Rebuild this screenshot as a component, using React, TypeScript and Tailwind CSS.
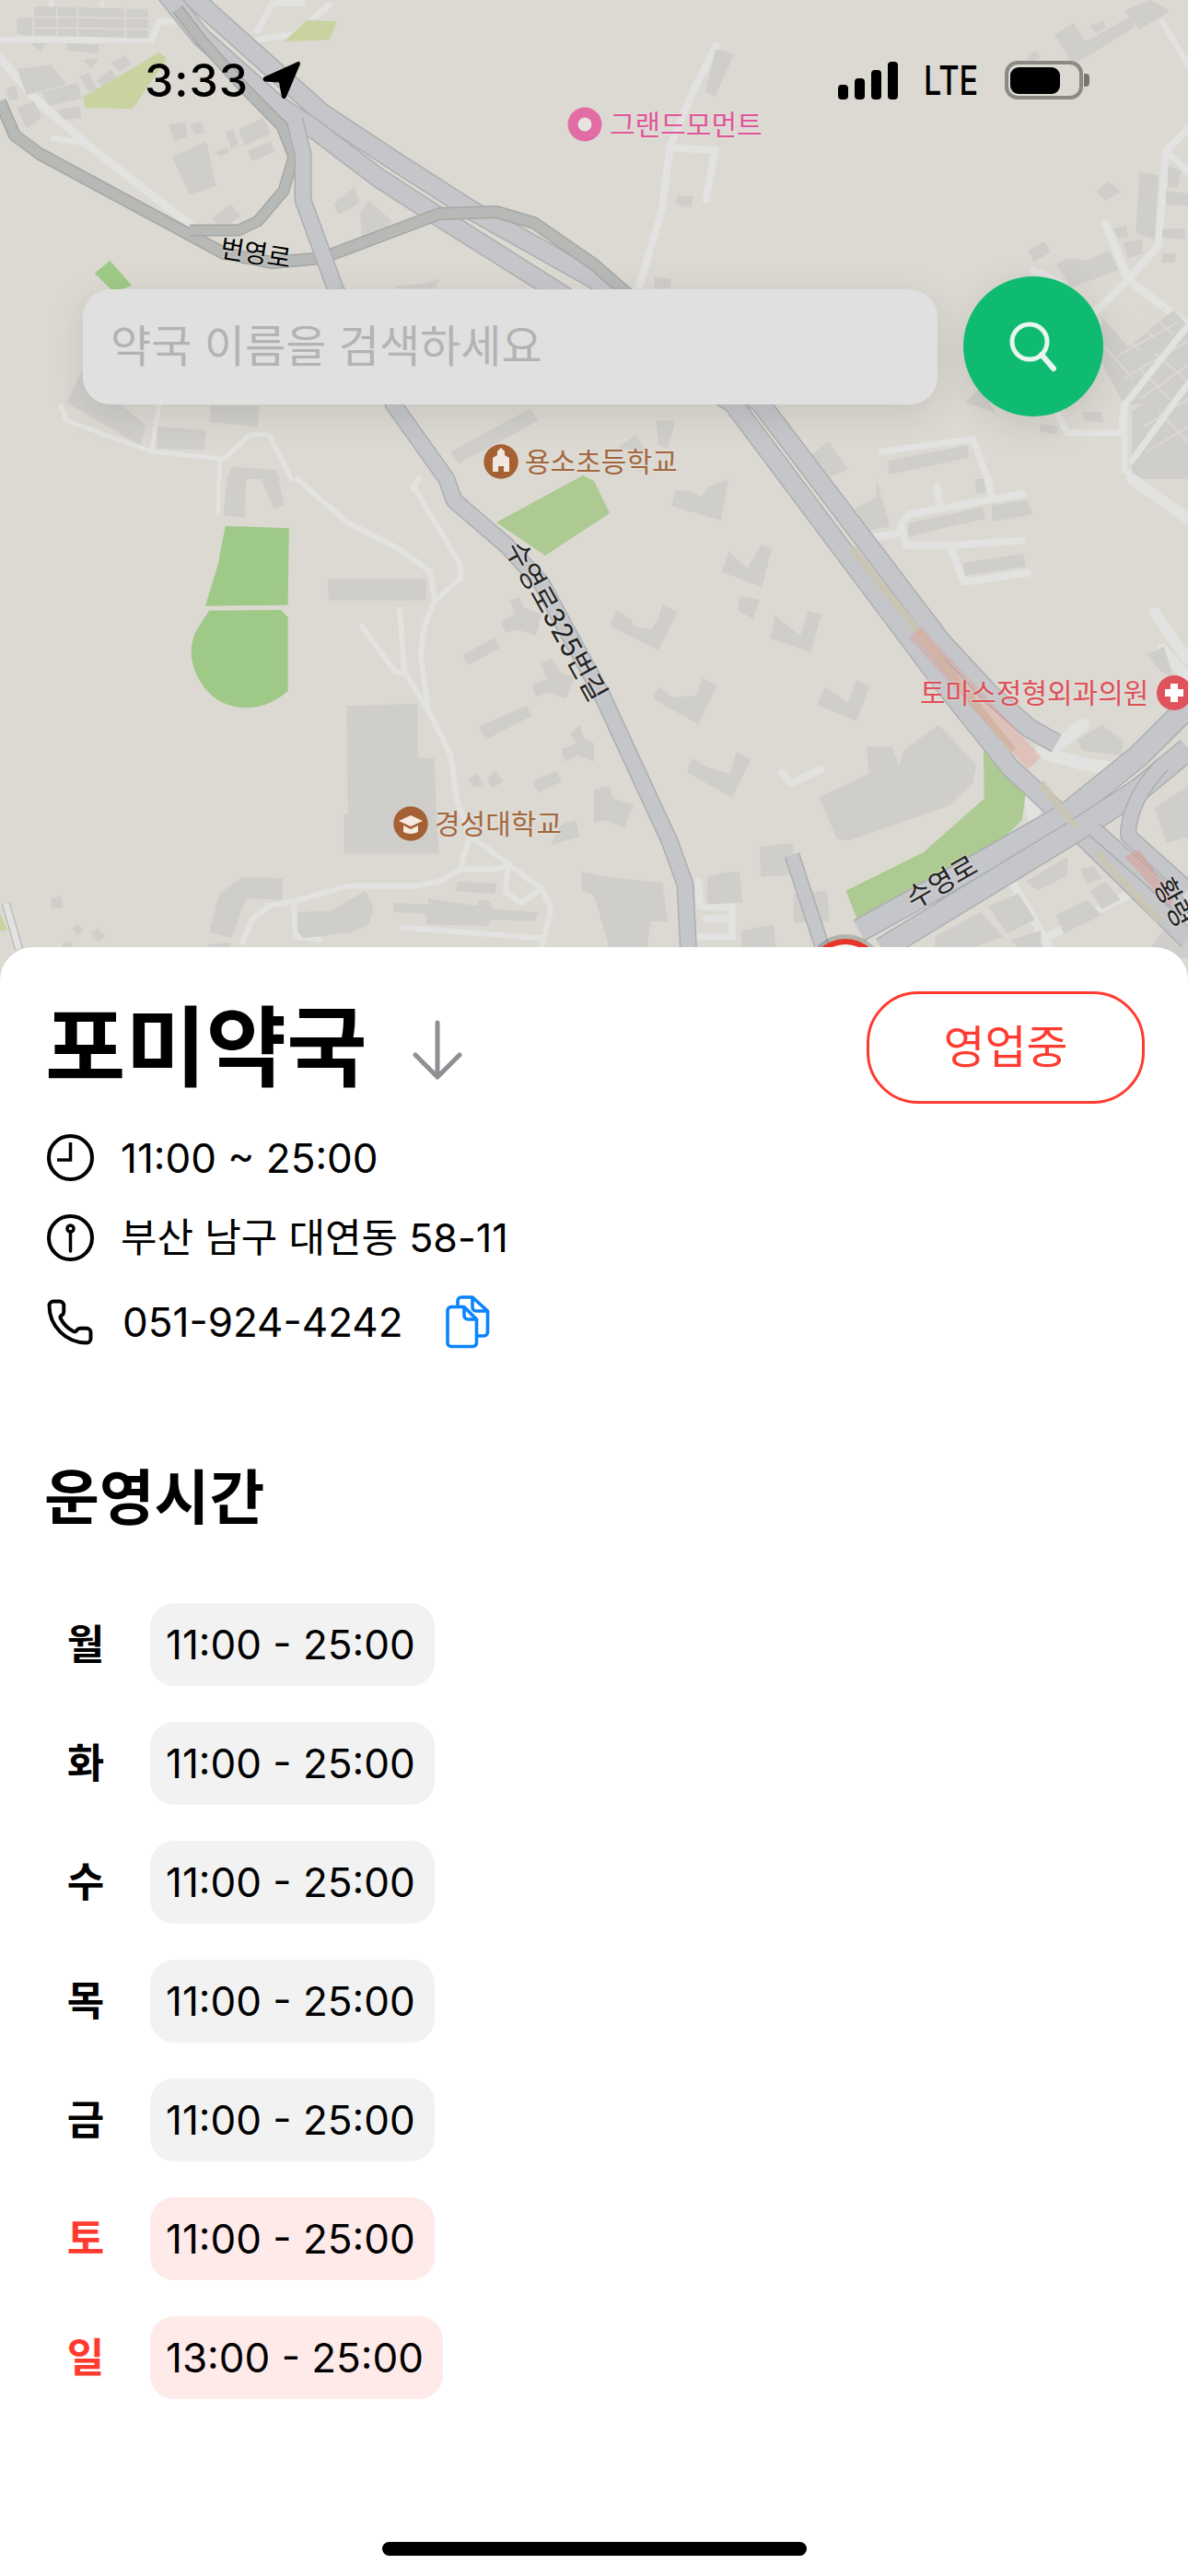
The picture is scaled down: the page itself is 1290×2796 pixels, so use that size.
import { Phone } from "lucide-react";

const FONT = "[font-family:Inter,'Noto_Sans_CJK_KR',sans-serif]";

// zoomed crops were 2.431 wide / 3 tall, so each block of map shapes keeps those coordinates
const toReal = (ox: number, oy: number) => `translate(${ox} ${oy}) scale(${1 / 2.431} ${1 / 3})`;

const hours = [
  { day: "월", time: "11:00 - 25:00" },
  { day: "화", time: "11:00 - 25:00" },
  { day: "수", time: "11:00 - 25:00" },
  { day: "목", time: "11:00 - 25:00" },
  { day: "금", time: "11:00 - 25:00" },
  { day: "토", time: "11:00 - 25:00", weekend: true },
  { day: "일", time: "13:00 - 25:00", weekend: true },
];

const MinorRoad = ({ d, w = 6 }: { d: string; w?: number }) => (
  <path d={d} fill="none" stroke="#e2e2e0" strokeWidth={w} strokeLinecap="round" strokeLinejoin="round" vectorEffect="non-scaling-stroke" />
);

const Buildings = ({ list }: { list: string[] }) => (
  <g fill="#cfcecb">
    {list.map((p) => (
      <polygon key={p} points={p} />
    ))}
  </g>
);

// thin gaps that break a block into small houses
const Lattice = ({ d }: { d: string }) => (
  <path d={d} fill="none" stroke="#dbd9d1" strokeWidth="2" vectorEffect="non-scaling-stroke" />
);

// main roads are in real pixels
const MajorRoad = ({ d, w = 20, color = "#c5c6ca", edge = "#adaeb0" }: { d: string; w?: number; color?: string; edge?: string }) => (
  <>
    <path d={d} fill="none" stroke={edge} strokeWidth={w + 2} strokeLinejoin="round" />
    <path d={d} fill="none" stroke={color} strokeWidth={w - 1} strokeLinejoin="round" />
  </>
);

const MapDrawing = () => (
  <svg className="absolute top-0 left-0" width="1290" height="1064" viewBox="0 0 1290 1064">
    {/* top left */}
    <g transform={toReal(0, 0)}>
      <MinorRoad d="M0 130H400L420 70H520" w={7} />
      <MinorRoad d="M135 0V125M270 10V125" w={5} />
      <MinorRoad d="M0 190L100 330L240 480L520 750" w={9} />
      <MinorRoad d="M140 450L220 465" />
      <MinorRoad d="M650 135L780 110L870 15M680 100L720 10H800" w={7} />
      <MinorRoad d="M160 1320L175 1370L400 1470L590 1495L660 1415H710L770 1560M420 1320L400 1470M580 1495V1560" w={5} />
      <Buildings
        list={[
          "45,60 85,55 85,115 45,110",
          "90,20 390,30 390,125 90,115",
          "45,225 135,210 175,275 70,310",
          "15,290 40,280 50,320 25,330",
          "110,300 205,270 215,320 130,345",
          "45,350 90,330 110,380 70,420",
          "150,360 210,345 215,385 170,390",
          "80,140 120,140 110,170",
          "175,140 260,145 260,175 180,165",
          "220,195 260,190 240,225",
          "295,205 330,180 345,210 315,235",
          "210,250 235,235 255,290 235,300",
          "255,260 295,225 310,260 270,285",
          "445,405 490,395 495,445 460,460",
          "500,405 530,395 540,430 515,440",
          "595,430 615,420 630,475 610,485",
          "630,420 695,385 715,435 645,475",
          "655,490 715,460 725,495 665,525",
          "570,495 600,480 605,495 580,510",
          "455,510 545,460 570,605 500,635",
          "560,710 610,665 635,705 585,745",
          "880,665 935,610 950,660 895,700",
          "950,690 975,655 1035,720 1000,765 955,770",
          "175,1310 215,1210 385,1385 370,1450",
          "415,1390 545,1400 540,1465 415,1460",
          "555,1320 685,1320 680,1390 555,1375",
          "1190,1470 1400,1330 1420,1370 1210,1510",
          "1045,930 1110,925 1160,910 1150,940 1045,940",
          "610,1520 730,1530 740,1560 600,1560",
        ]}
      />
      <Lattice d="M90 55L390 60M90 90L390 95M150 20V120M205 20V120M330 25V125" />
      <polygon points="220,315 340,230 420,170 440,190 350,355 225,350" fill="#c8d3a0" />
      <polygon points="750,135 810,65 890,70 870,130" fill="#c8d3a0" />
      <polygon points="250,890 290,848 348,930 300,950" fill="#9fca85" />
    </g>

    {/* top right */}
    <g transform={toReal(645, 0)}>
      <MinorRoad d="M322 150L260 300L200 480L180 680L120 930" w={8} />
      <MinorRoad d="M200 480L320 490L295 650" w={8} />
      <MinorRoad d="M1500 70L1568 210" />
      <MinorRoad d="M1568 420L1510 490L1490 800L1410 910L1310 1030" w={8} />
      <MinorRoad d="M1350 730L1410 910L1568 1060" w={9} />
      <MinorRoad d="M1160 880L1230 920" w={8} />
      <MinorRoad d="M1400 1320L1390 1410H1250L1215 1330M1400 1320V1530L1440 1560M1510 490L1568 560" w={7} />
      <MinorRoad d="M760 1470L1000 1430L1040 1560" w={7} />
      <Buildings
        list={[
          "320,160 370,175 320,315 295,300",
          "220,635 262,640 258,675 215,665",
          "1400,35 1470,0 1520,35 1440,95",
          "1310,85 1345,65 1350,90 1325,110",
          "1215,115 1265,75 1300,135 1420,50 1425,90 1260,215 1245,170",
          "1140,190 1165,165 1180,185 1155,205",
          "1325,620 1360,590 1390,625 1350,655",
          "1440,560 1490,570 1480,780 1430,760",
          "1515,540 1550,555 1540,610 1515,610",
          "1510,620 1568,630 1568,670 1510,670",
          "1370,745 1405,735 1410,775 1385,775",
          "1395,790 1445,780 1450,825 1410,840",
          "1500,745 1560,745 1560,780 1500,775",
          "1145,815 1190,785 1205,820 1160,855",
          "1220,860 1250,840 1300,850 1360,815 1385,880 1260,935",
          "1500,825 1535,825 1535,855 1500,855",
          "1340,1030 1410,1130 1530,1010 1568,1060 1568,1300 1400,1320 1340,1180",
          "1420,1340 1568,1200 1568,1560 1420,1560",
          "980,1310 1020,1260 1060,1345",
          "1290,1340 1340,1340 1345,1375 1295,1370",
          "1180,1380 1225,1390 1220,1415 1175,1405",
          "775,1500 985,1450 990,1490 780,1545",
          "575,1480 620,1435 670,1530 610,1560",
          "165,1370 215,1370 195,1460 170,1450",
          "60,1460 110,1415 140,1470",
          "160,900 205,910 200,940 160,940",
        ]}
      />
      <Lattice d="M1370 1070L1440 1140M1400 1020L1480 1100M1440 990L1530 1090M1350 1130L1420 1230M1480 1150L1568 1240M1440 1200L1520 1300M1390 1100L1510 1000M1380 1160L1540 1050M1400 1230L1568 1110M1440 1300L1568 1190M1450 1390L1568 1300M1460 1470L1568 1390M1490 1340L1568 1440" />
      <MinorRoad d="M1568 1060L1400 1320M1568 1250L1420 1500" w={7} />
    </g>

    {/* bottom left */}
    <g transform={toReal(0, 520)}>
      <MinorRoad d="M577 0V105" w={5} />
      <MinorRoad d="M785 0L915 140L1050 225L1135 300L1148 395L1120 480L1110 570L1130 750L1190 900L1205 1040L1240 1160L1215 1270L1160 1310L1095 1325H920L775 1375L710 1390L665 1435L640 1510" />
      <MinorRoad d="M1095 30L1215 280V325L1148 395M1090 30L1105 0" />
      <MinorRoad d="M1055 425L1068 630L1130 750M955 480L1045 630H1068" />
      <MinorRoad d="M1240 1160L1430 1335L1455 1400L1430 1520M1215 1270H1305L1340 1260L1335 1345L1375 1380L1430 1335" />
      <MinorRoad d="M775 1375L780 1490L845 1500M1060 1460L1430 1495" />
      <path d="M15 1380L50 1530" fill="none" stroke="#adaeb0" strokeWidth="9" vectorEffect="non-scaling-stroke" />
      <path d="M15 1380L50 1530" fill="none" stroke="#e2e2e0" strokeWidth="7" vectorEffect="non-scaling-stroke" />
      <Buildings
        list={[
          "600,0 650,0 645,125 590,118",
          "690,0 735,0 750,85 722,97",
          "865,323 1125,325 1125,395 868,395",
          "915,738 1103,732 1103,908 1146,910 1158,1220 908,1220 908,1092 918,1090",
          "1345,395 1370,385 1385,420 1430,440 1415,510 1365,490 1335,500 1320,465 1360,440",
          "1220,575 1305,515 1320,550 1237,605",
          "1428,600 1455,585 1480,630 1515,645 1495,715 1445,695 1415,710 1405,670 1445,650",
          "1265,805 1390,738 1403,772 1282,848",
          "1505,830 1530,800 1540,840 1568,860 1568,920 1525,900 1492,920 1482,880 1520,860",
          "1237,975 1260,960 1275,995 1250,1005",
          "1285,975 1305,950 1330,985 1300,1005",
          "1405,985 1470,950 1482,985 1420,1020",
          "1480,1125 1520,1110 1530,1165 1455,1190",
          "580,1350 640,1295 745,1300 745,1370 650,1365 610,1495 552,1475",
          "135,1365 160,1358 167,1395 135,1398",
          "190,1465 205,1450 220,1470 205,1485",
          "240,1480 258,1462 278,1490 260,1505",
          "785,1410 875,1405 965,1340 985,1400 975,1450 930,1475 800,1495 785,1470",
          "1040,1380 1130,1385 1130,1365 1260,1390 1265,1370 1295,1375 1300,1400 1420,1410 1410,1440 1295,1435 1290,1455 1125,1450 1125,1415 1038,1410",
          "1207,1310 1310,1318 1307,1350 1203,1342",
          "1535,1280 1568,1285 1568,1355 1535,1340",
          "550,1515 610,1510 605,1560 550,1560",
          "165,1510 190,1505 185,1540 165,1540",
        ]}
      />
      <polygon points="595,153 763,160 760,410 542,413 575,280" fill="#9fc986" />
      <path d="M552 428L742 426L760 450V690Q710 745 645 745Q560 740 520 640Q490 560 520 490Z" fill="#9fc986" />
      <polygon points="0,1415 20,1470 0,1470" fill="#c8d3a0" />
    </g>

    {/* bottom right */}
    <g transform={toReal(645, 520)}>
      <MinorRoad d="M905 25L915 90M1130 48L830 115L810 150L825 215H940L975 335L1145 305M945 215L1130 200M810 175L720 195M1050 60L1040 0" w={8} />
      <MinorRoad d="M1480 435L1568 590M1500 555L1568 650M1420 0L1568 130" w={12} />
      <MinorRoad d="M1290 800L1230 860L1180 890L1300 930L1380 945L1440 910" w={14} />
      <MinorRoad d="M495 955L520 990L600 945" w={8} />
      <MinorRoad d="M275 1310L280 1390L365 1395V1490H270M295 1432H365" w={8} />
      <MinorRoad d="M1100 940L1150 1020L1165 1130" w={14} />
      <MinorRoad d="M1095 1290L1200 1520M1200 1490L1430 1340L1540 1500" w={9} />
      <Buildings
        list={[
          "215,35 260,40 285,60 300,25 355,0 335,135 205,88",
          "690,95 745,60 745,0 782,155 762,158 720,170",
          "830,145 1025,90 1035,130 935,155 830,190",
          "1050,85 1145,68 1157,115 1052,138",
          "975,272 1135,243 1140,285 978,315",
          "1005,0 1030,0 1035,45 1010,48",
          "355,235 405,290 440,215 470,225 443,352 338,303",
          "385,382 437,393 420,455 378,425",
          "60,428 100,460 105,480 150,490 170,455 180,405 220,435 170,557 42,478",
          "478,445 545,510 565,428 600,440 572,565 466,518",
          "170,675 205,710 270,705 285,648 325,670 275,798 155,715",
          "610,675 670,730 692,655 727,675 693,790 590,735",
          "260,908 300,940 360,960 375,890 415,910 365,1038 245,955",
          "0,1010 40,1000 50,1040 105,1060 80,1135 25,1110 0,1120",
          "595,1035 725,960 720,870 785,870 805,930 820,880 910,800 1010,930 1000,990 935,1065 670,1178 640,1170",
          "438,1198 525,1185 532,1288 440,1295",
          "300,1295 345,1280 385,1280 392,1378 298,1385",
          "527,1350 615,1340 622,1440 528,1445",
          "0,1290 180,1315 195,1440 150,1440 140,1525 40,1525 0,1355",
          "390,1470 475,1450 480,1525 388,1525",
          "1275,850 1340,800 1395,850 1395,900 1290,885",
          "1480,1070 1568,1000 1568,1165 1510,1185",
          "1140,1310 1250,1230 1250,1290 1170,1340",
          "1285,1270 1320,1260 1340,1300 1300,1320",
          "1310,1340 1350,1310 1390,1370 1340,1400",
          "1040,1390 1120,1350 1165,1435 1090,1480",
          "900,1490 1020,1410 1080,1490 1000,1525 900,1525",
          "1220,1420 1300,1370 1340,1420 1240,1480",
          "1450,1560 1500,1470 1568,1500 1568,1560",
          "1460,570 1505,545 1530,650 1490,620",
          "1100,1500 1180,1470 1180,1525 1120,1525",
        ]}
      />
      <polygon points="1028,850 1100,940 1140,1020 1130,1110 1080,1170 700,1450 665,1340 870,1215 1030,1040" fill="#adca92" />
    </g>

    {/* small park by the school */}
    <polygon points="539,567 633,516 645,522 662,557 592,603" fill="#adca92" />

    <MajorRoad d="M201 -10L350 123L432 177L510 227L645 303L826 438L1023 697L1075 753L1117 790L1147 807" w={20} />
    <MajorRoad d="M178 -10L218 40L300 113L341 140L411 193L473 233L600 313L796 438L1017 733L1097 833L1155 887L1290 1020" w={20} />
    <MajorRoad d="M0 110L16 147L43 167L210 257L243 275L296 285L350 280L477 232L539 230L580 242L645 287L700 335" w={12} color="#b7b9b7" edge="#a5a7a5" />
    <MajorRoad d="M193 10L218 43L263 93L306 137L319 170L308 207L280 240L259 250H206" w={11} color="#b7b9b7" edge="#a5a7a5" />
    <MajorRoad d="M320 130L329 167L329 217L364 313L428 440L485 520L493 543L551 593L588 633L617 687L653 753L727 913L744 960L748 1040" w={17} />
    <MajorRoad d="M860 928L933 1150" w={15} />
    <MajorRoad d="M933 1010L1065 937L1159 883L1237 820L1290 767" w={24} />
    <MajorRoad d="M958 1030L1171 900L1237 857L1290 813" w={24} />
    <MajorRoad d="M1188 900L1290 990M1262 830Q1225 870 1225 907L1290 965" w={16} />

    {/* rail strip between the carriageways */}
    <path d="M925 595L1100 815M1130 850L1168 898M1190 925L1260 1000" fill="none" stroke="#c9c5b5" strokeWidth="8" />
    <g transform={toReal(645, 520)}>
      <polygon points="830,515 865,483 1182,905 1145,945" fill="#e58a7c" fillOpacity="0.28" />
      <polygon points="1400,1230 1440,1205 1530,1370 1520,1390" fill="#e58a7c" fillOpacity="0.35" />
    </g>

    {/* selected pin, cut off by the sheet */}
    <circle cx="918" cy="1056" r="42" fill="#000" fillOpacity="0.18" />
    <circle cx="918" cy="1059" r="40" fill="#e7352b" />
    <circle cx="918" cy="1059" r="34" fill="#f3f3f3" />

    {/* poi marks */}
    <circle cx="635" cy="135" r="18.5" fill="#e26ca6" />
    <circle cx="635" cy="135" r="7.5" fill="#e6e4df" />
    <circle cx="544" cy="501" r="18.7" fill="#a56134" />
    <path d="M535 512V497L540 494V490L544 486L548 490V494L553 497V512H547V506H541V512Z" fill="#f2e7de" />
    <circle cx="446" cy="894" r="18.7" fill="#a56134" />
    <path d="M433 891L446 885L459 891L446 897Z M438 896V903Q446 907 454 903V896L446 900Z" fill="#f5ebe3" />
    <circle cx="1275" cy="752" r="19" fill="#e0535d" />
    <path d="M1271 742H1279V748H1285V756H1279V762H1271V756H1265V748H1271Z" fill="#fff" />
  </svg>
);

const MapLabel = ({ className, children }: { className: string; children: string }) => (
  <span className={`absolute whitespace-nowrap leading-none [text-shadow:0_0_3px_#e6e5e0] ${className}`}>{children}</span>
);

const StatusBar = () => (
  <div className="absolute top-[61px] left-[157px] flex w-[1026px] items-center justify-between">
    <div className="flex items-center gap-[15px]">
      <span className="text-[50px] leading-[52px] font-medium tracking-[1px] text-black">3:33</span>
      <svg width="42" height="42" viewBox="0 0 42 42" fill="#000">
        <path d="M38.5 1L2 17.5Q-1 20.5 2.5 22.5L18 23.5L21 39.5Q23 42.5 25.5 40L41 3.5Q41 0 38.5 1Z" />
      </svg>
    </div>
    <div className="flex items-center">
      <div className="flex h-[41px] items-end gap-[7px]">
        <span className="h-[16px] w-[11px] rounded-[4px] bg-black" />
        <span className="h-[23px] w-[11px] rounded-[4px] bg-black" />
        <span className="h-[32px] w-[11px] rounded-[4px] bg-black" />
        <span className="h-[41px] w-[11px] rounded-[4px] bg-black" />
      </div>
      <span className="ml-[28px] w-[66px] origin-left scale-x-[0.78] text-[44px] leading-[48px] font-medium text-black">LTE</span>
      <div className="ml-[22px] flex h-[42px] w-[85px] items-center rounded-[14px] border-[4px] border-[#8a8984] pl-[2px]">
        <div className="h-[29px] w-[54px] rounded-[9px] bg-black" />
      </div>
      <div className="ml-[1px] h-[14px] w-[6px] rounded-r-[4px] bg-[#77766f]" />
    </div>
  </div>
);

const ClockIcon = () => (
  <svg width="51" height="51" viewBox="0 0 51 51" fill="none" stroke="#000" strokeWidth="4">
    <circle cx="25.5" cy="25.5" r="23.5" />
    <path d="M25.5 9V28H11" strokeWidth="3.5" />
  </svg>
);

const PinIcon = () => (
  <svg width="51" height="51" viewBox="0 0 51 51" fill="none" stroke="#000" strokeWidth="4">
    <circle cx="25.5" cy="25.5" r="23.5" />
    <circle cx="25.5" cy="15.5" r="3.5" strokeWidth="3.5" />
    <path d="M25.5 19V40" strokeWidth="3.5" strokeLinecap="round" />
  </svg>
);

const CopyIcon = () => (
  <svg width="48" height="58" viewBox="0 0 48 58" fill="none" stroke="#0a84ff" strokeWidth="3.6" strokeLinejoin="round">
    <path d="M6 12.5H20L33.5 26V51.5A4 4 0 0 1 29.5 55.5H6A4 4 0 0 1 2 51.5V16.5A4 4 0 0 1 6 12.5Z" />
    <path d="M20 12.5V22A4 4 0 0 0 24 26H33.5" />
    <path d="M13 12V6A4 4 0 0 1 17 2H29L45.5 17V40A4 4 0 0 1 41.5 44H34" />
    <path d="M29 2V13A4 4 0 0 0 33 17H45.5" />
  </svg>
);

export default function App() {
  return (
    <div className={`relative flex h-[2796px] w-[1290px] flex-col overflow-hidden bg-white text-black ${FONT}`}>
      {/* map */}
      <div className="relative h-[1064px] w-full shrink-0 overflow-hidden bg-[#dbd9d1]">
        <MapDrawing />

        <MapLabel className="top-[120px] left-[662px] text-[30px] text-[#e0559b]">그랜드모먼트</MapLabel>
        <MapLabel className="top-[486px] left-[570px] text-[30px] text-[#a3673f]">용소초등학교</MapLabel>
        <MapLabel className="top-[879px] left-[472px] text-[30px] text-[#a3673f]">경성대학교</MapLabel>
        <MapLabel className="top-[737px] left-[999px] text-[30px] text-[#df4f58]">토마스정형외과의원</MapLabel>
        <MapLabel className="top-[261px] left-[239px] rotate-[9deg] text-[28px] text-black">번영로</MapLabel>
        <MapLabel className="top-[659px] left-[508px] rotate-[61deg] text-[30px] text-[#222]">수영로325번길</MapLabel>
        <MapLabel className="top-[942px] left-[981px] -rotate-[30deg] text-[30px] text-[#222]">수영로</MapLabel>
        <MapLabel className="top-[940px] left-[1262px] origin-left rotate-[62deg] text-[30px] text-[#222]">황령</MapLabel>

        <StatusBar />

        {/* search */}
        <div className="absolute top-[300px] left-[90px] flex w-[1108px] items-center gap-[28px]">
          <div className="flex h-[125px] w-[928px] items-center rounded-[30px] bg-[#e0e0e0] pl-[30px] text-[48px] text-[#b3b3b3] shadow-[0_10px_40px_rgba(0,0,0,0.1)]">
            약국 이름을 검색하세요
          </div>
          <div className="flex h-[152px] w-[152px] shrink-0 items-center justify-center rounded-full bg-[#0fbb71] shadow-[0_10px_40px_rgba(0,0,0,0.1)]">
            <svg width="58" height="58" viewBox="0 0 58 58" fill="none" stroke="#e8f6ef" strokeWidth="5" strokeLinecap="round">
              <circle cx="25" cy="24" r="19" />
              <path d="M38 38L51 53" strokeWidth="6" />
            </svg>
          </div>
        </div>
      </div>

      {/* detail sheet */}
      <div className="relative -mt-[36px] flex flex-1 flex-col rounded-t-[36px] bg-white pt-[48px] pl-[50px]">
        <div className="flex h-[122px] items-center justify-between pr-[47px]">
          <div className="flex items-center gap-[49px]">
            <h1 className="-ml-[1px] text-[95px] leading-none font-bold">포미약국</h1>
            <svg width="54" height="66" viewBox="0 0 54 66" fill="none" stroke="#8e8e93" strokeWidth="5" strokeLinecap="round" strokeLinejoin="round" className="mt-[6px]">
              <path d="M27 3V62M3 38L27 62L51 38" />
            </svg>
          </div>
          <div className="flex h-[122px] w-[302px] items-center justify-center rounded-[56px] border-[3px] border-[#ff3b30] text-[49px] text-[#ff3b30]">
            영업중
          </div>
        </div>

        <div className="mt-[33px] ml-[1px] flex h-[51px] items-center gap-[29px] text-[44px]">
          <ClockIcon />
          <span>11:00 ~ 25:00</span>
        </div>
        <div className="mt-[36px] ml-[1px] flex h-[51px] items-center gap-[29px] text-[43px]">
          <PinIcon />
          <span>부산 남구 대연동 58-11</span>
        </div>
        <div className="mt-[40px] flex h-[51px] items-center text-[44px]">
          <Phone size={54} strokeWidth={1.75} className="-ml-[1px] shrink-0" />
          <span className="ml-[30px]">051-924-4242</span>
          <span className="ml-[46px]">
            <CopyIcon />
          </span>
        </div>

        <h2 className="mt-[128px] -ml-[2px] h-[76px] text-[65px] leading-[76px] font-bold">운영시간</h2>

        <div className="mt-[76px] flex flex-col gap-[39px]">
          {hours.map((h) => (
            <div key={h.day} className="flex items-center gap-[27px]">
              <span className={`w-[86px] text-center text-[44px] font-bold ${h.weekend ? "text-[#ff3b30]" : "text-black"}`}>{h.day}</span>
              <span className={`flex h-[90px] items-center rounded-[26px] pr-[21px] pl-[17px] text-[44px] ${h.weekend ? "bg-[#ffeaea]" : "bg-[#f2f2f2]"}`}>{h.time}</span>
            </div>
          ))}
        </div>

        <div className="mt-[155px] -ml-[50px] h-[15px] w-[461px] self-center rounded-full bg-black" />
      </div>
    </div>
  );
}
